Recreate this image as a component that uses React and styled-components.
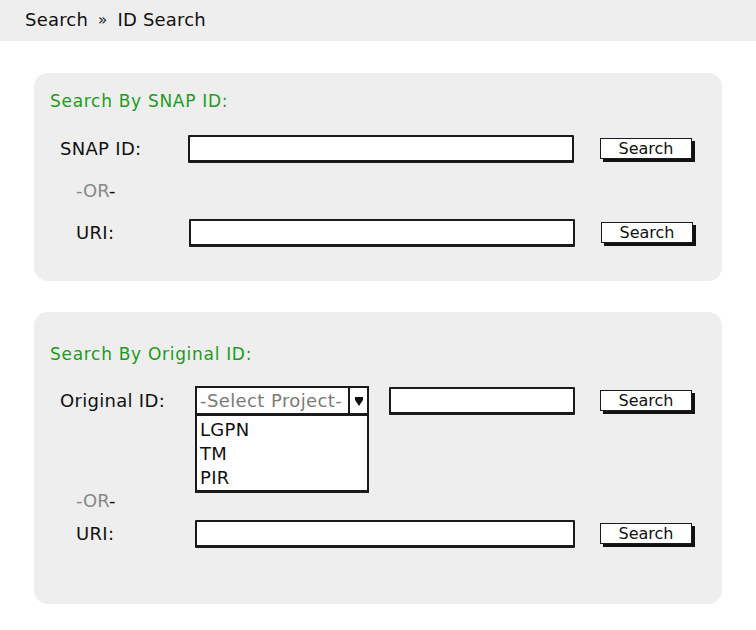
import React from 'react';
import styled, { createGlobalStyle } from 'styled-components';

const GlobalStyle = createGlobalStyle`
  body {
    margin: 0;
    background: #ffffff;
    font-family: "DejaVu Sans", "Open Sans", sans-serif;
    color: #111;
  }
`;

const TopBar = styled.div`
  height: 41px;
  box-sizing: border-box;
  padding: 0 0 3px 25px;
  background: #eeeeee;
  display: flex;
  align-items: center;
  font-size: 18px;
  letter-spacing: 0.2px;
  .sep {
    margin: 2px 10px 0;
    font-size: 15px;
  }
`;

const Content = styled.div`
  padding: 32px 0 0 34px;
  display: flex;
  flex-direction: column;
  gap: 31px;
`;

const Panel = styled.div`
  width: 688px;
  height: ${p => p.$height}px;
  box-sizing: border-box;
  padding: ${p => p.$top}px 0 0 16px;
  background: #eeeeee;
  border-radius: 14px;
`;

const Title = styled.div`
  height: 24px;
  line-height: 24px;
  color: #1c9c1c;
  font-size: 17px;
  letter-spacing: 0.7px;
`;

const Row = styled.div`
  display: flex;
  align-items: center;
  height: 29px;
  margin-top: ${p => p.$mt}px;
  position: relative;
`;

const Label = styled.div`
  width: ${p => p.$w}px;
  padding-left: ${p => p.$indent}px;
  box-sizing: border-box;
  font-size: 18px;
  letter-spacing: 0.3px;
  flex-shrink: 0;
`;

const Or = styled.div`
  height: 24px;
  line-height: 24px;
  margin-top: ${p => p.$mt}px;
  padding-left: 26px;
  color: #888;
  font-size: 18px;
  span { color: #111; }
`;

const Input = styled.div`
  width: ${p => p.$w}px;
  height: 28px;
  box-sizing: border-box;
  background: #fff;
  border: 2px solid #1a1a1a;
  border-right-width: 2.5px;
  border-bottom-width: 3px;
  border-radius: 1px;
  margin-right: ${p => p.$mr}px;
`;

const Button = styled.div`
  width: 92px;
  height: 21px;
  box-sizing: border-box;
  background: #fff;
  border: 1.5px solid #1a1a1a;
  box-shadow: 3px 3px 0 #111;
  font-size: 16px;
  display: flex;
  align-items: center;
  justify-content: center;
`;

const Select = styled.div`
  position: relative;
  width: 174px;
  height: 29px;
  box-sizing: border-box;
  background: #fff;
  border: 2px solid #1a1a1a;
  display: flex;
  align-items: center;
  margin-right: 20px;
  .text {
    flex: 1;
    padding-left: 3px;
    font-size: 18px;
    letter-spacing: 0.4px;
    color: #7a7a7a;
    white-space: nowrap;
    overflow: hidden;
  }
  .arrow {
    width: 17px;
    height: 100%;
    border-left: 2px solid #1a1a1a;
    display: flex;
    align-items: center;
    justify-content: center;
    flex-shrink: 0;
  }
`;

const DropList = styled.div`
  position: absolute;
  left: -2px;
  top: 26px;
  width: 174px;
  box-sizing: border-box;
  background: #fff;
  border: 2px solid #1a1a1a;
  border-bottom-width: 3px;
  padding: 2px 0 0 3px;
  z-index: 2;
  div {
    height: 24px;
    line-height: 24px;
    font-size: 18px;
    letter-spacing: 0.3px;
  }
`;

const App = () => {
  return (
    <>
      <GlobalStyle />
      <TopBar>
        Search<span className="sep">»</span>ID Search
      </TopBar>
      <Content>
        <Panel $height={208} $top={16}>
          <Title>Search By SNAP ID:</Title>
          <Row $mt={21}>
            <Label $w={138} $indent={10}>SNAP ID:</Label>
            <Input $w={386} $mr={26} />
            <Button>Search</Button>
          </Row>
          <Or $mt={16}>-OR<span>-</span></Or>
          <Row $mt={15}>
            <Label $w={139} $indent={26}>URI:</Label>
            <Input $w={386} $mr={26} />
            <Button>Search</Button>
          </Row>
        </Panel>
        <Panel $height={292} $top={30}>
          <Title>Search By Original ID:</Title>
          <Row $mt={20}>
            <Label $w={145} $indent={10}>Original ID:</Label>
            <Select>
              <span className="text">-Select Project-</span>
              <span className="arrow">
                <svg width="10" height="12" viewBox="0 0 10 12">
                  <path d="M1 2 L9 2 L9 5 L5 11 L1 5 Z" fill="#111" />
                </svg>
              </span>
              <DropList>
                <div>LGPN</div>
                <div>TM</div>
                <div>PIR</div>
              </DropList>
            </Select>
            <Input $w={186} $mr={25} />
            <Button>Search</Button>
          </Row>
          <Or $mt={74}>-OR<span>-</span></Or>
          <Row $mt={6}>
            <Label $w={145} $indent={26}>URI:</Label>
            <Input $w={380} $mr={25} />
            <Button>Search</Button>
          </Row>
        </Panel>
      </Content>
    </>
  );
};

export default App;
